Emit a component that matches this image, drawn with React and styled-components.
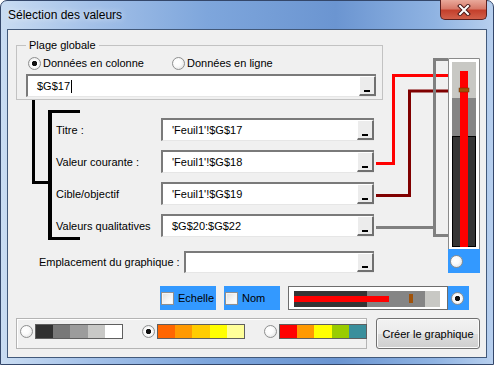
import React from "react";
import styled, { createGlobalStyle } from "styled-components";

const GlobalStyle = createGlobalStyle`
  html, body { margin: 0; padding: 0; background: #fff; }
  body {
    font-family: "Liberation Sans", Arial, sans-serif;
    font-size: 11px;
    color: #000;
  }
`;

const Window = styled.div`
  width: 494px;
  height: 365px;
  box-sizing: border-box;
  display: flex;
  flex-direction: column;
  padding: 0 6px 6px 6px;
  border: 1px solid #34476a;
  border-radius: 7px 7px 0 0;
  background: linear-gradient(90deg, #c9dcf2 0%, #a4c1e8 18%, #7ea6dc 42%, #6b95d1 68%, #8fb3e2 88%, #b7cfee 100%);
`;

const TitleBar = styled.div`
  height: 28px;
  display: flex;
  align-items: center;
  justify-content: space-between;
  padding-left: 1px;
`;

const Title = styled.span`
  font-size: 12px;
  color: #000;
  text-shadow: 0 0 6px rgba(255, 255, 255, 0.9);
`;

const CloseButton = styled.div`
  align-self: flex-start;
  margin-top: -1px;
  width: 47px;
  height: 20px;
  box-sizing: border-box;
  border: 1px solid #5a2020;
  border-top: none;
  border-radius: 0 0 5px 5px;
  background: linear-gradient(180deg, #e9a99b 0%, #d77a6a 45%, #c4402c 55%, #d1604a 100%);
  display: flex;
  align-items: center;
  justify-content: center;
`;

const Content = styled.div`
  height: 329px;
  box-sizing: border-box;
  border: 1px solid #42597a;
  background: #f0f0f0;
  padding: 8px 6px 0 8px;
`;

const TopArea = styled.div`
  display: flex;
  align-items: flex-start;
`;

const LeftCol = styled.div`
  width: 360px;
  flex: none;
  display: flex;
  flex-direction: column;
`;

const GroupBox = styled.fieldset`
  width: 367px;
  box-sizing: border-box;
  margin: 0;
  padding: 0 0 2px 9px;
  min-width: 0;
  border: 1px solid #c2c2c2;
`;

const Legend = styled.legend`
  padding: 0 3px;
  line-height: 14px;
  font-size: 11px;
`;

const RadioRow = styled.div`
  margin-top: 4px;
  height: 14px;
  display: flex;
  align-items: center;
  padding-left: 2px;
`;

const RadioOption = styled.div`
  display: flex;
  align-items: center;
  gap: 2px;
  width: ${(p) => (p.$w ? `${p.$w}px` : "auto")};
  white-space: nowrap;
`;

const Radio = styled.span`
  display: inline-block;
  flex: none;
  width: 13px;
  height: 13px;
  box-sizing: border-box;
  border-radius: 50%;
  border: 1px solid #8e8f8f;
  margin-top: ${(p) => p.$mt || 0}px;
  background: ${(p) =>
    p.$checked
      ? "radial-gradient(circle, #111 0 2.3px, #fff 3px, #f4f4f4 60%, #dcdcdc 100%)"
      : "radial-gradient(circle at 40% 40%, #fff 0, #fbfbfb 40%, #dadada 100%)"};
`;

const FieldBox = styled.div`
  display: flex;
  flex: none;
  box-sizing: border-box;
  width: ${(p) => p.$w}px;
  height: ${(p) => p.$h || 23}px;
  margin-top: ${(p) => p.$mt || 0}px;
  background: #fff;
  border-top: 2px solid #7a7a7a;
  border-left: 2px solid #7a7a7a;
  border-bottom: 1px solid #e6e6e6;
`;

const FieldText = styled.div`
  flex: 1;
  display: flex;
  align-items: center;
  padding-left: 9px;
  white-space: nowrap;
  font-size: 11px;
`;

const Caret = styled.span`
  display: inline-block;
  width: 1px;
  height: 13px;
  background: #000;
  margin-left: 1px;
`;

const RefButton = styled.div`
  width: 17px;
  flex: none;
  box-sizing: border-box;
  background: #ececec;
  border-top: 1px solid #fff;
  border-left: 1px solid #fff;
  border-right: 2px solid #707070;
  border-bottom: 2px solid #707070;
  display: flex;
  align-items: flex-end;
  justify-content: center;
  padding-bottom: 2px;
`;

const Dash = styled.span`
  width: 6px;
  height: 2px;
  background: #000;
`;

const FieldsSection = styled.div`
  display: flex;
  align-items: flex-start;
`;

const OuterBracket = styled.div`
  margin-left: 16px;
  width: 16px;
  height: 84px;
  box-sizing: border-box;
  border-left: 3px solid #000;
  border-bottom: 3px solid #000;
`;

const FieldList = styled.div`
  margin-top: 10px;
  width: 326px;
  box-sizing: border-box;
  border-left: 4px solid #000;
  display: flex;
  flex-direction: column;
`;

const BracketEnd = styled.div`
  width: 28px;
  height: 3px;
  background: #000;
`;

const FieldRows = styled.div`
  margin-top: 5px;
  display: flex;
  flex-direction: column;
  gap: 9px;
`;

const FieldRow = styled.div`
  display: flex;
  align-items: center;
  height: 23px;
`;

const FieldLabel = styled.div`
  width: ${(p) => p.$w}px;
  margin-left: ${(p) => p.$ml || 0}px;
  padding-left: ${(p) => p.$pl || 0}px;
  box-sizing: border-box;
  flex: none;
  white-space: nowrap;
`;

const PlacementRow = styled.div`
  margin-top: 11px;
  display: flex;
  align-items: center;
  height: 22px;
`;

const RightArea = styled.div`
  display: flex;
  align-items: flex-start;
  margin-top: 20px;
`;

const GaugeCol = styled.div`
  width: 32px;
  display: flex;
  flex-direction: column;
`;

const BlueCell = styled.div`
  background: #3399ff;
  width: ${(p) => p.$w}px;
  height: 24px;
  box-sizing: border-box;
  padding-left: ${(p) => p.$pl || 0}px;
  display: flex;
  align-items: center;
  gap: 4px;
  flex: none;
  margin-right: ${(p) => p.$mr || 0}px;
`;

const CheckRow = styled.div`
  margin-top: 13px;
  padding-left: 144px;
  display: flex;
  height: 24px;
`;

const Checkbox = styled.span`
  width: 13px;
  height: 13px;
  box-sizing: border-box;
  border: 1px solid #8f8f8f;
  background: linear-gradient(135deg, #dedede 0%, #f6f6f6 60%, #fff 100%);
  box-shadow: inset 0 0 0 1px #f4f4f4;
  flex: none;
`;

const BottomRow = styled.div`
  margin-top: 8px;
  display: flex;
  gap: 9px;
`;

const SwatchGroup = styled.div`
  width: 351px;
  height: 31px;
  box-sizing: border-box;
  border: 1px solid #b4b4b4;
  box-shadow: inset 1px 1px 0 #fff;
  display: flex;
  align-items: flex-start;
  padding: 5px 0 0 3px;
`;

const SwatchOption = styled.div`
  display: flex;
  align-items: flex-start;
  gap: 2px;
  margin-left: ${(p) => p.$ml || 0}px;
`;

const Swatch = styled.div`
  width: 88px;
  height: 15px;
  box-sizing: border-box;
  border: 1px solid #5f5f5f;
  display: flex;
`;

const SwatchCell = styled.div`
  flex: 1;
  background: ${(p) => p.$c};
`;

const CreateButton = styled.button`
  width: 104px;
  height: 31px;
  padding: 0;
  font-family: "Liberation Sans", Arial, sans-serif;
  font-size: 11px;
  color: #000;
  border: 1px solid #707070;
  border-radius: 3px;
  background: linear-gradient(180deg, #f2f2f2 0%, #ebebeb 50%, #dddddd 51%, #cfcfcf 100%);
  box-shadow: inset 0 0 0 1px #fbfbfb;
`;

const fields = [
  { label: "Titre :", value: "'Feuil1'!$G$17" },
  { label: "Valeur courante :", value: "'Feuil1'!$G$18" },
  { label: "Cible/objectif", value: "'Feuil1'!$G$19" },
  { label: "Valeurs qualitatives", value: "$G$20:$G$22" },
];

const palettes = [
  { colors: ["#303030", "#787878", "#9c9c9c", "#c8c8c6", "#ffffff"], checked: false, ml: 0 },
  { colors: ["#ff6600", "#ff9900", "#ffcc00", "#ffff00", "#ffff99"], checked: true, ml: 19 },
  { colors: ["#ff0000", "#ff9900", "#ffff00", "#99cc00", "#3a8f9c"], checked: false, ml: 19 },
];

const RefField = ({ w, h, mt, children }) => (
  <FieldBox $w={w} $h={h} $mt={mt}>
    <FieldText>{children}</FieldText>
    <RefButton>
      <Dash />
    </RefButton>
  </FieldBox>
);

const Connectors = () => (
  <svg width="72" height="182" style={{ flex: "none", display: "block" }}>
    <path d="M0 105.5 H17.5 V17.5 H72" fill="none" stroke="#ff0000" strokeWidth="3" />
    <path d="M0 137.5 H33.5 V33 H72" fill="none" stroke="#800000" strokeWidth="3" />
    <path d="M0 169.5 H58.5" fill="none" stroke="#808080" strokeWidth="3" />
    <path d="M72 1.5 H58.5 V177.5 H72" fill="none" stroke="#808080" strokeWidth="3" />
  </svg>
);

const Gauge = () => (
  <svg width="32" height="191" style={{ display: "block" }}>
    <rect x="0" y="0" width="32" height="191" fill="#fff" />
    <path d="M0.5 191 V0.5 H31.5 V191" fill="none" stroke="#8a8a8a" strokeWidth="1" />
    <rect x="4" y="4" width="24" height="36" fill="#c8c8c4" />
    <rect x="4" y="40" width="24" height="38" fill="#858585" />
    <rect x="4.5" y="78.5" width="23" height="110" fill="#353535" stroke="#000" />
    <rect x="12" y="13" width="8" height="176" fill="#ff0000" />
    <rect x="11" y="30" width="10" height="4" fill="#a0520a" stroke="#6a3000" strokeWidth="0.5" />
  </svg>
);

const BarPreview = () => (
  <svg width="160" height="24" style={{ display: "block", flex: "none" }}>
    <rect x="0.5" y="0.5" width="159" height="23" fill="#fff" stroke="#6d6d6d" />
    <rect x="6" y="5" width="73" height="16" fill="#353535" />
    <rect x="79" y="5" width="58" height="16" fill="#858585" />
    <rect x="137" y="5" width="15" height="16" fill="#c8c8c4" />
    <rect x="6" y="10" width="95" height="6" fill="#ff0000" />
    <rect x="121" y="8" width="4" height="9" fill="#a0520a" />
  </svg>
);

export default function App() {
  return (
    <>
      <GlobalStyle />
      <Window>
        <TitleBar>
          <Title>Sélection des valeurs</Title>
          <CloseButton>
            <svg width="14" height="12" viewBox="0 0 14 12">
              <path d="M3 2 L11 10 M11 2 L3 10" stroke="#4a1a1a" strokeWidth="4" strokeLinecap="square" />
              <path d="M3 2 L11 10 M11 2 L3 10" stroke="#fff" strokeWidth="2" strokeLinecap="square" />
            </svg>
          </CloseButton>
        </TitleBar>
        <Content>
          <TopArea>
            <LeftCol>
              <GroupBox>
                <Legend>Plage globale</Legend>
                <RadioRow>
                  <RadioOption $w={144}>
                    <Radio $checked />
                    <span>Données en colonne</span>
                  </RadioOption>
                  <RadioOption>
                    <Radio />
                    <span>Données en ligne</span>
                  </RadioOption>
                </RadioRow>
                <RefField w={350} mt={4}>
                  $G$17
                  <Caret />
                </RefField>
              </GroupBox>
              <FieldsSection>
                <OuterBracket />
                <FieldList>
                  <BracketEnd />
                  <FieldRows>
                    {fields.map((f) => (
                      <FieldRow key={f.label}>
                        <FieldLabel $w={109} $pl={4}>
                          {f.label}
                        </FieldLabel>
                        <RefField w={213}>{f.value}</RefField>
                      </FieldRow>
                    ))}
                  </FieldRows>
                  <BracketEnd />
                </FieldList>
              </FieldsSection>
              <PlacementRow>
                <FieldLabel $w={145} $ml={23}>
                  Emplacement du graphique :
                </FieldLabel>
                <RefField w={190} h={22} />
              </PlacementRow>
            </LeftCol>
            <RightArea>
              <Connectors />
              <GaugeCol>
                <Gauge />
                <BlueCell $w={32} $pl={2}>
                  <Radio />
                </BlueCell>
              </GaugeCol>
            </RightArea>
          </TopArea>

          <CheckRow>
            <BlueCell $w={56} $pl={1} $mr={8}>
              <Checkbox />
              <span>Echelle</span>
            </BlueCell>
            <BlueCell $w={56} $pl={1} $mr={8}>
              <Checkbox />
              <span>Nom</span>
            </BlueCell>
            <BarPreview />
            <BlueCell $w={21} $pl={3}>
              <Radio $checked />
            </BlueCell>
          </CheckRow>

          <BottomRow>
            <SwatchGroup>
              {palettes.map((p, i) => (
                <SwatchOption key={i} $ml={p.ml}>
                  <Radio $checked={p.checked} $mt={1} />
                  <Swatch>
                    {p.colors.map((c) => (
                      <SwatchCell key={c} $c={c} />
                    ))}
                  </Swatch>
                </SwatchOption>
              ))}
            </SwatchGroup>
            <CreateButton>Créer le graphique</CreateButton>
          </BottomRow>
        </Content>
      </Window>
    </>
  );
}
